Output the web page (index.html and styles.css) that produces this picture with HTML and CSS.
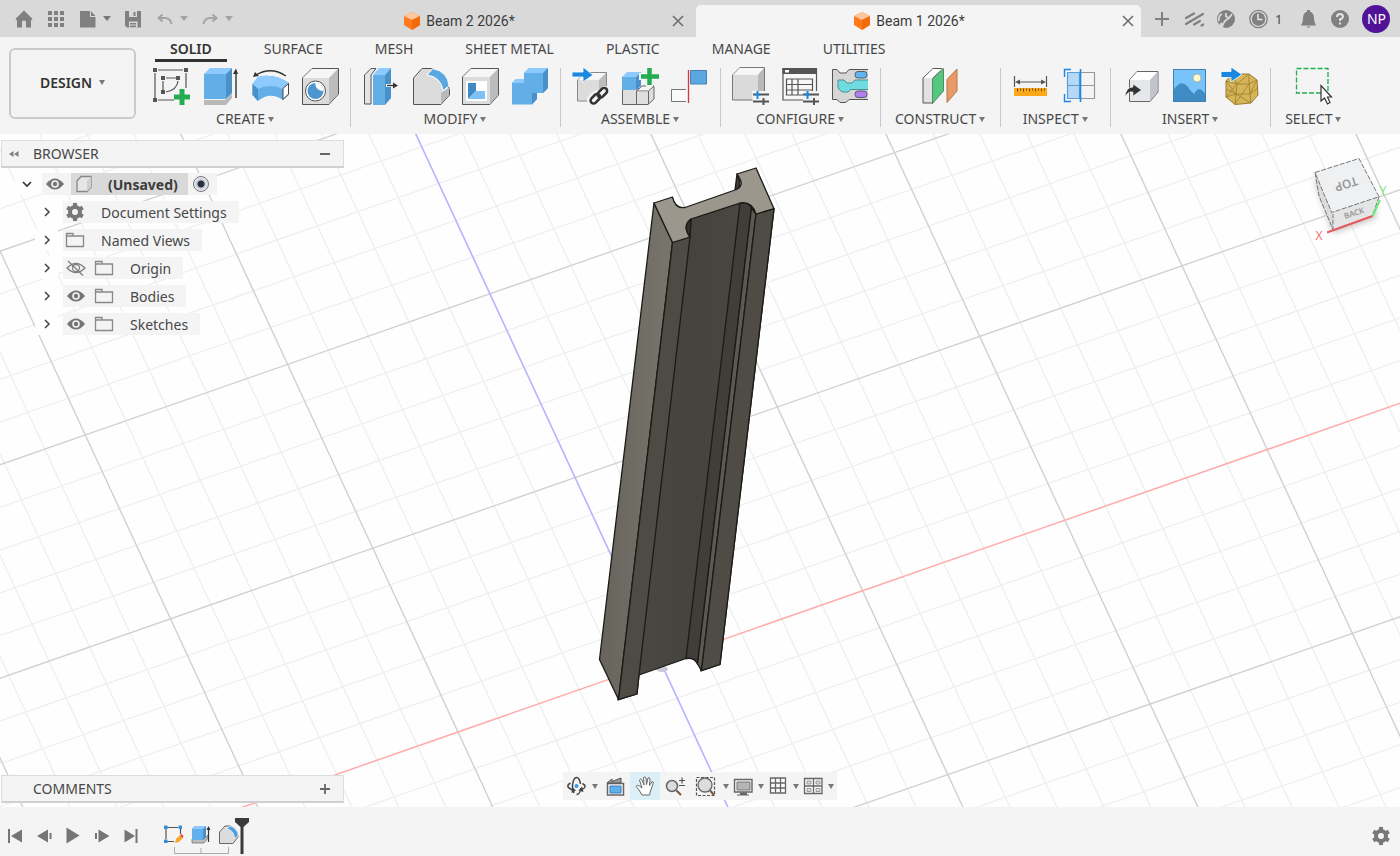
FILE: index.html
```html
<!DOCTYPE html>
<html lang="en">
<head>
<meta charset="utf-8">
<title>Beam 1 2026*</title>
<link rel="stylesheet" href="styles.css">
</head>
<body>
<div class="app">
  <header class="topbar">
    <div class="quick">
      <button class="tool" aria-label="Home"><svg viewBox="14 8 20 20"><path d="M24 9.500 15.800 17.500V19H17V26.500H22V20.500Q24 18.500 26 20.500V26.500H31V19H32.200V17.500Z" fill="#808080"/></svg></button>
      <button class="tool" aria-label="Show data panel"><svg viewBox="46 8 20 20"><path d="M48 10h4v4h-4zM54 10h4v4h-4zM60 10h4v4h-4zM48 16h4v4h-4zM54 16h4v4h-4zM60 16h4v4h-4zM48 22h4v4h-4zM54 22h4v4h-4zM60 22h4v4h-4z" fill="#808080"/></svg></button>
      <button class="tool tool--menu" aria-label="File"><svg viewBox="79 8 20 20"><path d="M81 10H91V16H96.500V26.500H81ZM92 10 96.500 15H92Z" fill="#808080"/></svg></button>
      <button class="tool" aria-label="Save"><svg viewBox="124 8 20 20"><path d="M126 10H142V26.500H128L126 24.500Z" fill="#808080"/><path d="M130 10h8v6h-8zM130 20.500h8.500v6h-8.500z" fill="#d9d9d9"/><path d="M134.500 11h2v4h-2zM131 22h6v1.500h-6zM131 24.500h6v1.500h-6z" fill="#808080"/></svg></button>
      <button class="tool tool--menu tool--off" aria-label="Undo"><svg viewBox="156 8 20 20"><path d="M163.500 13.500 159.500 17l4 3.500M160 17h6.500q5 .5 6 6" fill="none" stroke="#a3a3a3" stroke-width="2"/></svg></button>
      <button class="tool tool--menu tool--off" aria-label="Redo"><svg viewBox="200 8 20 20"><path d="M212.500 13.500 216.500 17l-4 3.500M216 17h-6.500q-5 .5-6 6" fill="none" stroke="#a3a3a3" stroke-width="2"/></svg></button>
    </div>
    <nav class="docs" aria-label="Documents">
      <div class="doc">
        <button class="doc__name"><svg viewBox="404 12 18 20"><path d="M405 17 413 13 421 17V26L413 31 405 26Z" fill="#ff7a1c"/><path d="M405 17 413 13 421 17 413 21Z" fill="#ffc79c"/><path d="M413 21 421 17V26L413 31Z" fill="#f26a0a"/></svg>Beam 2 2026*</button>
        <button class="doc__close" aria-label="Close Beam 2"><svg viewBox="0 0 12 12"><path d="M1 1 11 11M11 1 1 11" stroke="#6e6e6e" stroke-width="1.600"/></svg></button>
      </div>
      <div class="doc doc--active">
        <button class="doc__name"><svg viewBox="404 12 18 20"><path d="M405 17 413 13 421 17V26L413 31 405 26Z" fill="#ff7a1c"/><path d="M405 17 413 13 421 17 413 21Z" fill="#ffc79c"/><path d="M413 21 421 17V26L413 31Z" fill="#f26a0a"/></svg>Beam 1 2026*</button>
        <button class="doc__close" aria-label="Close Beam 1"><svg viewBox="0 0 12 12"><path d="M1 1 11 11M11 1 1 11" stroke="#6e6e6e" stroke-width="1.600"/></svg></button>
      </div>
    </nav>
    <div class="account">
      <button class="tool" aria-label="New design"><svg viewBox="1152 8 20 20"><path d="M1162 11v14M1155 18h14" stroke="#808080" stroke-width="2"/></svg></button>
      <button class="tool" aria-label="Extensions"><svg viewBox="1184 8 20 20"><path d="M1186 17 1194 12.500M1186 23 1203 13M1194 23.500 1200 20M1201.500 24.500l2-1" stroke="#808080" stroke-width="2.200" stroke-linecap="round"/></svg></button>
      <button class="tool" aria-label="Activity"><svg viewBox="1216 8 20 20"><circle cx="1226" cy="18" r="9" fill="#808080"/><path d="M1222 28Q1222 21 1229 17L1232 13M1229 17 1226 15.500V12M1219 20Q1218 15 1222 13" fill="none" stroke="#d9d9d9" stroke-width="1.800"/><path d="M1219 29 1219.500 23 1222 21 1223 29Z" fill="#d9d9d9"/></svg></button>
      <button class="tool tool--jobs" aria-label="Job status, 1 job"><svg viewBox="1248 8 20 20"><circle cx="1258.500" cy="18" r="8.700" fill="none" stroke="#808080" stroke-width="1.300"/><circle cx="1258.500" cy="18" r="6.700" fill="#808080"/><path d="M1258 13v5.500h4.500" fill="none" stroke="#e8e8e8" stroke-width="1.500"/></svg><span>1</span></button>
      <button class="tool" aria-label="Notifications"><svg viewBox="1298 8 20 20"><path d="M1307 10.500V9h3v1.500Q1314 12 1314 17 1314 22 1316 24.500H1301Q1303 22 1303 17 1303 12 1307 10.500ZM1306.500 25.500h4Q1308.500 28 1306.500 25.500Z" fill="#808080"/></svg></button>
      <button class="tool" aria-label="Help"><svg viewBox="1331 8 20 20"><circle cx="1341" cy="18" r="9" fill="#808080"/><path d="M1338 16Q1338 13 1341 13 1344 13 1344 15.500 1344 17 1341 18.500V20M1341 21.500v2" fill="none" stroke="#e4e4e4" stroke-width="2"/></svg></button>
      <button class="avatar" aria-label="Account NP">NP</button>
    </div>
  </header>

  <section class="ribbon">
    <button class="workspace caret">DESIGN</button>
    <div class="ribbon__main">
      <nav class="tabs" aria-label="Toolbar tabs">
        <button class="tab tab--active">SOLID</button>
        <button class="tab">SURFACE</button>
        <button class="tab">MESH</button>
        <button class="tab">SHEET METAL</button>
        <button class="tab">PLASTIC</button>
        <button class="tab">MANAGE</button>
        <button class="tab">UTILITIES</button>
      </nav>
      <div class="groups">
        <div class="group">
          <div class="group__tools">
            <button class="cmd" aria-label="Create sketch"><svg viewBox="150 66 40 40"><path d="M158 70h25M155 73v25M186 73v15M158 100h16M166 78h10M163 81v9M178 81Q177 90 166 92" fill="none" stroke="#555" stroke-width="1.200"/><path d="M153 68h4v4h-4zM184 68h4v4h-4zM153 98h4v4h-4zM161 76h4v4h-4zM176 76h4v4h-4zM161 90h4v4h-4z" fill="#555"/><path d="M182 89v16M174 97h16" stroke="#23ad50" stroke-width="5"/></svg></button>
            <button class="cmd" aria-label="Extrude"><svg viewBox="200 66 40 40"><path d="M204 100H225L232 93.500V98L226 105H204Z" fill="#b9b9b9"/><path d="M204 74H226V99H204Z" fill="#62aee6"/><path d="M204 74 210 68H232L226 74Z" fill="#8ccaff"/><path d="M226 74 232 68V93L226 99Z" fill="#4a90c9"/><path d="M236 98V71" stroke="#333" stroke-width="1.400"/><path d="M233 74h5l-2-5.500z" fill="#333"/></svg></button>
            <button class="cmd" aria-label="Revolve"><svg viewBox="250 66 40 40"><path d="M252.500 84 258 77Q274 73 289 83V95L283 100Q270 91 258 101L252.500 95Z" fill="#62aee6"/><path d="M252.500 84 258 77Q274 73 289 83L283 89Q270 83 258 89Z" fill="#8ccaff"/><path d="M252.500 84 258 89V101L252.500 95Z" fill="#4a90c9"/><path d="M283 88.500 288.500 83.500V94L283 99.500Z" fill="#fff" stroke="#444"/><path d="M286 76Q271 66 256 75" fill="none" stroke="#333" stroke-width="1.300"/><path d="M253 77 255 72 259 76Z" fill="#333"/></svg></button>
            <button class="cmd" aria-label="Hole"><svg viewBox="300 66 40 40"><path d="M302.500 78 312 68.500H338.500V94L329 104.500H302.500Z" fill="#dcdcdc" stroke="#555"/><path d="M303 78 312 69H338L329 78Z" fill="#f6f6f6"/><path d="M329 78 338 69V94L329 104Z" fill="#bcbcbc"/><circle cx="315.500" cy="91" r="10" fill="#fff" stroke="#555"/><circle cx="315.500" cy="91" r="8" fill="#4d96d0"/><path d="M315 83A8 8 0 0 1 323.500 91Q316 91 315 83Z" fill="#fff"/></svg></button>
          </div>
          <button class="group__label caret">CREATE</button>
        </div>
        <div class="group">
          <div class="group__tools">
            <button class="cmd" aria-label="Press pull"><svg viewBox="360 66 40 40"><path d="M364.500 75 371 68.500H376L371 75V104H364.500Z" fill="#e4e4e4" stroke="#555"/><path d="M373 75H385V105H373Z" fill="#62aee6"/><path d="M373 75 379 68H391L385 75Z" fill="#8ccaff"/><path d="M385 75 391 68V98L385 105Z" fill="#4a90c9"/><path d="M386 85.500H395" stroke="#fff" stroke-width="3"/><path d="M387 85.500H395" stroke="#333" stroke-width="1.400"/><path d="M393 82.500 398 85.500 393 88.500Z" fill="#333"/></svg></button>
            <button class="cmd" aria-label="Fillet"><svg viewBox="410 66 40 40"><path d="M413.500 78 422 68.500H431Q448 72 449.500 91V95L441 104.500H413.500Z" fill="#dcdcdc" stroke="#555"/><path d="M441 93 449 88V95L441 104Z" fill="#b9b9b9"/><path d="M427 75 433 68.500Q448 72 449 86L443 90.500Q441 77 427 75Z" fill="#5ba7e2" stroke="#fff"/></svg></button>
            <button class="cmd" aria-label="Shell"><svg viewBox="460 66 40 40"><path d="M462.500 77 471 68.500H498.500V95L490 104.500H462.500Z" fill="#dcdcdc" stroke="#555"/><path d="M463 77 471 69H498L490 77Z" fill="#f6f6f6"/><path d="M490 77 498 69V95L490 104Z" fill="#bcbcbc"/><path d="M466 81H487V101H466Z" fill="#fff"/><path d="M468 83H476V91L468 99Z" fill="#3f89c4"/><path d="M468 99 476 91H485V99Z" fill="#7cc0f5"/></svg></button>
            <button class="cmd" aria-label="Combine"><svg viewBox="510 66 40 40"><path d="M512 83 516 79H524V73L529 68H548V88L543 93H537V99L532 104.500H512Z" fill="#62aee6"/><path d="M524 73 529 68H548L543 73ZM512 83 516 79H524V83Z" fill="#8ccaff"/><path d="M543 73 548 68V88L543 93ZM532 93H537V99L532 104.500Z" fill="#4a90c9"/></svg></button>
          </div>
          <button class="group__label caret">MODIFY</button>
        </div>
        <div class="group">
          <div class="group__tools">
            <button class="cmd" aria-label="Insert component"><svg viewBox="571 66 40 40"><path d="M578.500 80 587 72.500H607.500V92L600 101H578.500Z" fill="#dcdcdc" stroke="#888"/><path d="M579 80 587 73H607L600 80Z" fill="#f6f6f6"/><path d="M600 80 607 73V92L600 101Z" fill="#bcbcbc"/><path d="M573 72H584V67L594 75 584 82V77H573Z" fill="#1b87e0" stroke="#fff" stroke-width=".8"/><g fill="none" stroke="#f4f4f4" stroke-width="6"><rect x="590" y="95" width="12" height="6" rx="3" transform="rotate(-45 596 98)"/><rect x="598" y="91" width="12" height="6" rx="3" transform="rotate(-45 604 94)"/></g><g fill="none" stroke="#333" stroke-width="2.500"><rect x="591" y="96" width="11" height="6" rx="3" transform="rotate(-45 596 99)"/><rect x="598" y="90" width="11" height="6" rx="3" transform="rotate(-45 603 93)"/></g></svg></button>
            <button class="cmd" aria-label="New component"><svg viewBox="621 66 40 40"><path d="M623.500 89V104.500H649L655 99V86.500L637 89Z" fill="#dedede" stroke="#666"/><path d="M637.500 104V91L643 86H655L649.500 91H637.500M649.500 91V104" fill="#f4f4f4" stroke="#666"/><path d="M638 91.500H649V104H638Z" fill="#dedede"/><path d="M623 77H637V90H623Z" fill="#62aee6"/><path d="M623 77 628 72H642L637 77Z" fill="#8ccaff"/><path d="M637 77 642 72V86L637 90Z" fill="#4a90c9"/><path d="M650.500 67v20M640 76.500h20" stroke="#f4f4f4" stroke-width="7"/><path d="M650.500 68v17M642 76.500h18" stroke="#23ad50" stroke-width="4.500"/></svg></button>
            <button class="cmd" aria-label="Joint"><svg viewBox="671 66 40 40"><path d="M687 89.500H672.500V101.500H687" fill="#fafafa" stroke="#777"/><path d="M691.500 70.500H707.500V84H691.500Z" fill="#5ba7e2" stroke="#4682b0"/><path d="M689.500 70V103" stroke="#d8383c" stroke-width="1.300"/></svg></button>
          </div>
          <button class="group__label caret">ASSEMBLE</button>
        </div>
        <div class="group">
          <div class="group__tools">
            <button class="cmd" aria-label="Configure model"><svg viewBox="732 66 40 40"><path d="M734.500 75 742 67.500H766.500V93L760 100H734.500Z" fill="#dadada" stroke="#777"/><path d="M735 75 742 68H766L760 75Z" fill="#f6f6f6"/><path d="M760 75 766 68V93L760 99Z" fill="#b9b9b9"/><path d="M754 91h18v14h-17z" fill="#f4f4f4"/><path d="M755 94.500h16M755 101.500h16M765.500 98v7" stroke="#555" stroke-width="2"/><path d="M759.500 91v8M757 94.500h5" stroke="#1b87e0" stroke-width="2"/></svg></button>
            <button class="cmd" aria-label="Configuration table"><svg viewBox="781 66 40 40"><path d="M784 68.500H817.500V100H784Z" fill="#f8f8f8" stroke="#555" stroke-width="1.200"/><path d="M783.500 68H818V74H783.500Z" fill="#555"/><path d="M786 70h4v2.500h-4z" fill="#fff"/><path d="M787.500 79H813.500V95H787.500ZM787.500 84.500H813.500M787.500 90H813.500M793 79V95M799 79V95" fill="none" stroke="#555" stroke-width="1.200"/><path d="M804 91h17v14h-17z" fill="#f4f4f4"/><path d="M804 94.500h16M804 101.500h16M815 98v7" stroke="#555" stroke-width="2"/><path d="M808.500 91v8M806 94.500h5" stroke="#1b87e0" stroke-width="2"/></svg></button>
            <button class="cmd" aria-label="Rules"><svg viewBox="831 66 40 40"><path d="M869 69.500H850L847 73H841L838 69.500H833.500V99.500H838L841 102.500H847L850 99.500H869" fill="#d6d6d6" stroke="#555"/><path d="M869 80H856L853 83H848L845 80H839V88L843 92H849L852 89.500H869" fill="#6fdde0" stroke="#4d8f92"/><rect x="856" y="71.500" width="12" height="6.500" rx="3" fill="#5fb5f3" stroke="#55606a"/><rect x="856" y="91" width="12" height="6.500" rx="3" fill="#b27cf2" stroke="#55606a"/></svg></button>
          </div>
          <button class="group__label caret">CONFIGURE</button>
        </div>
        <div class="group">
          <div class="group__tools">
            <button class="cmd" aria-label="Offset plane"><svg viewBox="922 66 40 40"><path d="M925 78 935 68.500H944L935 78V103H925Z" fill="#e2e2e2" stroke="#555"/><path d="M926 78 935 69H944L934 78Z" fill="#fff"/><path d="M934.500 79 945.500 68.500V91L934.500 103.500Z" fill="#55c77f" stroke="#4f8f66"/><path d="M949 79.500 959 69V91L949 102.500Z" fill="#e79a66" stroke="#b77747"/></svg></button>
          </div>
          <button class="group__label caret">CONSTRUCT</button>
        </div>
        <div class="group">
          <div class="group__tools">
            <button class="cmd" aria-label="Measure"><svg viewBox="1012 66 40 40"><path d="M1016.500 76V87M1048.500 76V87M1019 82H1046" stroke="#555" stroke-width="1.200"/><path d="M1017 82 1022 79.500V84.500ZM1048 82 1043 79.500V84.500Z" fill="#555"/><path d="M1016 88H1049V96H1016Z" fill="#fba919"/><path d="M1019.500 88.500v3M1022.500 88.500v2M1025.500 88.500v3M1028.500 88.500v2M1031.500 88.500v3M1034.500 88.500v2M1037.500 88.500v3M1040.500 88.500v2M1043.500 88.500v3M1046.500 88.500v2" stroke="#6b4a12"/></svg></button>
            <button class="cmd" aria-label="Section analysis"><svg viewBox="1062 66 40 40"><path d="M1083 72.500H1096.500V98.500H1083M1083 85.500H1096.500" fill="none" stroke="#999" stroke-width="1.200"/><path d="M1069.500 72.500H1081.500V98.500H1069.500ZM1069.500 85.500H1081.500" fill="#b4d8f6" stroke="#5a9fd6" stroke-width="1.200"/><path d="M1066.500 77V69.500H1073M1066.500 94V101.500H1073" fill="none" stroke="#1b87e0" stroke-width="1.400"/><path d="M1082.500 69V102" stroke="#1b87e0" stroke-width="1.600"/></svg></button>
          </div>
          <button class="group__label caret">INSPECT</button>
        </div>
        <div class="group">
          <div class="group__tools">
            <button class="cmd" aria-label="Insert derive"><svg viewBox="1123 66 40 40"><path d="M1132.500 80 1140 71.500H1161V92L1153 101.500H1132.500Z" fill="#e6e7ea" stroke="#666"/><path d="M1133 80 1140 72H1160L1153 80Z" fill="#fff"/><path d="M1153 80 1160.500 72V92L1153 101Z" fill="#c2c4cc"/><path d="M1128 97Q1129 87 1136 87V84L1144.500 90 1136 96V92Q1131 91 1128 97Z" fill="#333" stroke="#f4f4f4" stroke-width=".6"/></svg></button>
            <button class="cmd" aria-label="Canvas"><svg viewBox="1173 66 40 40"><path d="M1176 69H1209V102H1176Z" fill="#78c3fa"/><circle cx="1200" cy="78" r="4" fill="#fffbd0" stroke="#8a9a80" stroke-width=".6"/><path d="M1176 91Q1185 76 1193 90L1197 94Q1202 84 1209 95V102H1176Z" fill="#3f8cc4"/><path d="M1176.500 69.500H1208.500V101.500H1176.500Z" fill="none" stroke="#3f7fb0"/></svg></button>
            <button class="cmd" aria-label="Insert mesh"><svg viewBox="1223 66 40 40"><path d="M1229 81 1235 74 1252 74 1260 80 1261 95 1254 103 1238 104.500 1229 97Z" fill="#d6b458" stroke="#9b7d2e"/><path d="M1229 81 1240 84 1252 84 1260 80M1240 84 1238 104M1252 84 1254 103M1229 97 1240 84M1238 104 1252 84M1229 89 1239 94 1253 94 1261 88M1229 81 1239 94M1253 94 1260 80M1240 84 1252 74 1252 84M1235 74 1240 84M1239 94 1229 97M1254 103 1239 94" fill="none" stroke="#9b7d2e" stroke-width=".8"/><path d="M1224 71.500H1234V67L1245 74.500 1234 82V77.500H1224Z" fill="#1b87e0" stroke="#fff" stroke-width=".8"/></svg></button>
          </div>
          <button class="group__label caret">INSERT</button>
        </div>
        <div class="group">
          <div class="group__tools">
            <button class="cmd" aria-label="Select"><svg viewBox="1297 66 40 40"><path d="M1300.500 68.500H1332V93H1300.500Z" fill="none" stroke="#23ad50" stroke-width="1.300" stroke-dasharray="5 2"/><path d="M1325 85.500V101L1328.500 98 1331.500 104 1334 102.500 1331.500 97H1335.500Z" fill="#fff" stroke="#333" stroke-width="1.200"/></svg></button>
          </div>
          <button class="group__label caret">SELECT</button>
        </div>
      </div>
    </div>
  </section>

  <main class="viewport">
    <svg class="scene" viewBox="0 134 1400 673" preserveAspectRatio="xMidYMid slice" aria-label="Beam model">
      <defs>
        <linearGradient id="side" x1="0" y1="0" x2="1" y2="0"><stop offset="0" stop-color="#66645c"/><stop offset="1" stop-color="#77756c"/></linearGradient>
        <linearGradient id="web" x1="0" y1="0" x2="1" y2="0"><stop offset="0" stop-color="#4b4943"/><stop offset=".5" stop-color="#45433e"/><stop offset="1" stop-color="#4c4a43"/></linearGradient>
      </defs>
      <g transform="matrix(1.0115 -0.353 0.426 0.919 660.300 661.400)" fill="none">
        <g stroke="#eeeeee" stroke-width="1.200">
          <path d="M-1200-880H1200M-1200-840H1200M-1200-760H1200M-1200-720H1200M-1200-680H1200M-1200-640H1200M-1200-560H1200M-1200-520H1200M-1200-480H1200M-1200-440H1200M-1200-360H1200M-1200-320H1200M-1200-280H1200M-1200-240H1200M-1200-160H1200M-1200-120H1200M-1200-80H1200M-1200-40H1200M-1200 40H1200M-1200 80H1200M-1200 120H1200M-1200 160H1200M-1200 240H1200M-1200 280H1200M-1200 320H1200M-1200 360H1200M-1200 440H1200"/>
          <path d="M-760-900V900M-720-900V900M-680-900V900M-640-900V900M-560-900V900M-520-900V900M-480-900V900M-440-900V900M-360-900V900M-320-900V900M-280-900V900M-240-900V900M-160-900V900M-120-900V900M-80-900V900M-40-900V900M40-900V900M80-900V900M120-900V900M160-900V900M240-900V900M280-900V900M320-900V900M360-900V900M440-900V900M480-900V900M520-900V900M560-900V900M640-900V900M680-900V900M720-900V900M760-900V900M840-900V900M880-900V900"/>
        </g>
        <path d="M-1200-800H1200M-1200-600H1200M-1200-400H1200M-1200-200H1200M-1200 200H1200M-1200 400H1200M-800-900V900M-600-900V900M-400-900V900M-200-900V900M200-900V900M400-900V900M600-900V900M800-900V900" stroke="#d0d0d0" stroke-width="1.300"/>
        <path d="M-1200 0H1200" stroke="#ffabab" stroke-width="1.500"/>
        <path d="M0-900V900" stroke="#b4b4ff" stroke-width="1.500"/>
      </g>
      <ellipse cx="662" cy="669" rx="6" ry="3" fill="#c9c9d6"/>
      <g stroke="#1b1a17" stroke-width="1.300" stroke-linejoin="round">
        <path d="M691 219 740 203Q753 203 756 214L774 209 720 664.500 701 671Q698 656 686 658.500L639 675 637 694 618 700 672 242 690 237Z" fill="url(#web)"/>
        <path d="M654 203 672.500 242.500 618.500 699.500 599.500 659.500Z" fill="url(#side)"/>
        <path d="M672.500 242.500 690 237 639 675 637 694 618.500 699.500Z" fill="#4e4b44"/>
        <path d="M740 203Q749 202 751.500 208L697.500 664Q694 657 686 658.500Z" fill="#403e39"/>
        <path d="M751.500 208 756 214 701.500 670.500 697.500 664Z" fill="#5b5952"/>
        <path d="M756 214 774 208.700 720 664.500 701.500 670.500Z" fill="#4e4c45"/>
        <path d="M737 174 740 182Q740 189 735 190Z" fill="#3e3c37"/>
        <path d="M654 203 672.500 197Q675 209 685 207.500L735 190Q745 186 739 177L737 174 756 168 774 208.700 756 214Q752 201 740 203L691 219Q682 226 690 237L672.500 242.500Z" fill="#9b978c"/>
        <path d="M691 219Q682 226 690 237Z" fill="#34322e"/>
      </g>
    </svg>

    <svg class="viewcube" viewBox="1300 145 100 100" aria-label="View cube">
      <defs><filter id="soft"><feGaussianBlur stdDeviation="3"/></filter></defs>
      <path d="M1314 178 1333 233 1376 218 1374 200Z" fill="#999" opacity=".6" filter="url(#soft)"/>
      <path d="M1315 172.500 1331.700 212.500 1333 229.500 1319 196Z" fill="#dcdcdc"/>
      <path d="M1331.700 212.500 1379 196.700 1372.500 216 1333 229.500Z" fill="#e4e5e6"/>
      <path d="M1315 172.500 1359 158.500 1379 196.700 1331.700 212.500Z" fill="#eff0f1"/>
      <path d="M1315 172.500 1359 158.500 1379 196.700 1331.700 212.500ZM1315 172.500 1319 196 1333 229.500V214M1379 196.700 1372.500 216" fill="none" stroke="#777" stroke-dasharray="5 1.500"/>
      <path d="M1327 232.500 1372.500 216" stroke="#e5595c" stroke-width="2"/>
      <path d="M1372.500 216 1380 200" stroke="#6be873" stroke-width="2"/>
      <text class="viewcube__top" x="1346" y="184" transform="rotate(162 1346 184)" dy="4">TOP</text>
      <text class="viewcube__back" x="1354" y="213" transform="rotate(-17 1354 213)" dy="3">BACK</text>
      <text class="viewcube__x" x="1319" y="240">X</text>
      <text class="viewcube__y" x="1383" y="195">Y</text>
    </svg>

    <aside class="browser">
      <header class="panel">
        <button class="panel__fold" aria-label="Collapse browser"><svg viewBox="0 0 10 8"><path d="M4.500 1V7L0 4ZM9.500 1V7L5 4Z" fill="#808080"/></svg></button>
        <h2>BROWSER</h2>
        <button class="panel__act" aria-label="Minimize browser"><svg viewBox="0 0 12 12"><path d="M1 6H11" stroke="#666" stroke-width="2"/></svg></button>
      </header>
      <ul class="tree">
        <li class="row row--root">
          <button class="twist" aria-label="Collapse"><svg viewBox="0 0 12 12"><path d="M2 4 6 8 10 4" fill="none" stroke="#333" stroke-width="1.600"/></svg></button>
          <span class="row__body">
            <button class="ico" aria-label="Toggle visibility"><svg viewBox="0 0 20 20"><use href="#eye"/></svg></button>
            <button class="item item--on"><svg viewBox="0 0 20 20"><path d="M3 7 7 2.500H17V13L13 17.500H3Z" fill="#e6e6e6" stroke="#888" stroke-width="1.300"/><path d="M13 7 17 2.500V13L13 17.500Z" fill="#cfcfcf"/></svg><b>(Unsaved)</b></button>
            <label class="activate"><input type="radio" name="active" checked aria-label="Activate component"></label>
          </span>
        </li>
        <li class="row">
          <button class="twist" aria-label="Expand"><svg viewBox="0 0 12 12"><use href="#chev"/></svg></button>
          <span class="row__body"><button class="item"><svg viewBox="0 0 20 20"><use href="#gear"/></svg>Document Settings</button></span>
        </li>
        <li class="row">
          <button class="twist" aria-label="Expand"><svg viewBox="0 0 12 12"><use href="#chev"/></svg></button>
          <span class="row__body"><button class="item"><svg viewBox="0 0 20 20"><use href="#folder"/></svg>Named Views</button></span>
        </li>
        <li class="row">
          <button class="twist" aria-label="Expand"><svg viewBox="0 0 12 12"><use href="#chev"/></svg></button>
          <span class="row__body"><button class="ico" aria-label="Toggle visibility"><svg viewBox="0 0 20 20"><path d="M1 10Q10 1 19 10 10 19 1 10Z" fill="none" stroke="#808080" stroke-width="1.300"/><circle cx="10" cy="10" r="3.500" fill="none" stroke="#808080" stroke-width="1.300"/><path d="M2 3 17 17.500" stroke="#808080" stroke-width="1.300"/></svg></button><button class="item"><svg viewBox="0 0 20 20"><use href="#folder"/></svg>Origin</button></span>
        </li>
        <li class="row">
          <button class="twist" aria-label="Expand"><svg viewBox="0 0 12 12"><use href="#chev"/></svg></button>
          <span class="row__body"><button class="ico" aria-label="Toggle visibility"><svg viewBox="0 0 20 20"><use href="#eye"/></svg></button><button class="item"><svg viewBox="0 0 20 20"><use href="#folder"/></svg>Bodies</button></span>
        </li>
        <li class="row">
          <button class="twist" aria-label="Expand"><svg viewBox="0 0 12 12"><use href="#chev"/></svg></button>
          <span class="row__body"><button class="ico" aria-label="Toggle visibility"><svg viewBox="0 0 20 20"><use href="#eye"/></svg></button><button class="item"><svg viewBox="0 0 20 20"><use href="#folder"/></svg>Sketches</button></span>
        </li>
      </ul>
    </aside>

    <div class="dock">
      <div class="panel">
        <h2>COMMENTS</h2>
        <button class="panel__act" aria-label="Show comments"><svg viewBox="0 0 12 12"><path d="M1 6H11M6 1V11" stroke="#666" stroke-width="1.800"/></svg></button>
      </div>
      <div class="navbar">
        <button class="nav nav--s" aria-label="Orbit"><svg viewBox="567 775 22 22"><path d="M575 793Q573 790 573.500 785 574.500 777.500 577.500 777.500 580.500 777.500 581.500 784M582 788Q581 794.500 577.500 794.500" fill="none" stroke="#444" stroke-width="1.500"/><path d="M571.500 783Q566 786 571.500 789L574 790M583.500 783.500Q589 786.500 583 789.500" fill="none" stroke="#444" stroke-width="1.500"/><path d="M573 787 577 790.500 572.500 793ZM583 786.500 579.500 790.500 584.500 792Z" fill="#444"/><circle cx="577.500" cy="786" r="2" fill="#3b9de8"/></svg></button>
        <button class="drop caret" aria-label="Orbit options"></button>
        <button class="nav" aria-label="Look at"><svg viewBox="605 775 22 22"><path d="M608.500 783.500H624.500V795H608.500Z" fill="#f8f8f8" stroke="#666" stroke-width="1.500"/><path d="M611 786H622V793H611Z" fill="#5fb0ee" stroke="#3b7fb8"/><path d="M608 783 613 779V781.500L622 778V783Z" fill="#9a9a9a" stroke="#555"/></svg></button>
        <button class="nav nav--on" aria-label="Pan"><svg viewBox="636 775 22 22"><path d="M644 795Q641 789 638 786.500 639 784.500 641.500 786L644 788 641.500 780Q642.500 778 644 780L646 785 645.500 777.500Q647 776 648 778L648.500 784.500 650 778Q651.500 777 652 779L651.500 785.500 654 781.500Q656 781.500 655 784L652.500 791 651.500 795Z" fill="#fff" stroke="#666"/></svg></button>
        <button class="nav" aria-label="Zoom"><svg viewBox="665 775 22 22"><circle cx="673" cy="786" r="5.500" fill="#dcdcdc" stroke="#666" stroke-width="1.500"/><path d="M677.500 790.500 682 795" stroke="#7a5a48" stroke-width="2.200"/><path d="M680 780.500h6M683 777.500v6M680 785.500h6" stroke="#555" stroke-width="1.200"/></svg></button>
        <button class="nav" aria-label="Fit"><svg viewBox="695 775 22 22"><path d="M697.500 777.500H715.500V795.500H697.500Z" fill="none" stroke="#555" stroke-width="1.200" stroke-dasharray="3 1.500"/><circle cx="706" cy="785" r="7" fill="#dcdcdc" stroke="#666" stroke-width="1.300"/><path d="M711 790.500 715 795" stroke="#7a5a48" stroke-width="2.200"/></svg></button>
        <button class="drop caret" aria-label="Fit options"></button>
        <button class="nav nav--s" aria-label="Display settings"><svg viewBox="733 775 22 22"><path d="M735.500 779.500H753V792H735.500Z" fill="#f4f4f4" stroke="#666" stroke-width="1.400"/><path d="M738 782H751V790H738Z" fill="#b5b5b5" stroke="#777"/><path d="M741 792.500h7v2h-7zM738 794.500h12v1h-12z" fill="#666"/></svg></button>
        <button class="drop caret" aria-label="Display options"></button>
        <button class="nav nav--s" aria-label="Grid and snaps"><svg viewBox="768 775 22 22"><path d="M771.500 778H786.500V793H771.500ZM776.500 778V793M781.500 778V793M771.500 783H786.500M771.500 788H786.500" fill="#fafafa" stroke="#666" stroke-width="1.300"/></svg></button>
        <button class="drop caret" aria-label="Grid options"></button>
        <button class="nav nav--s" aria-label="Viewports"><svg viewBox="805 775 22 22"><path d="M807.500 778.500H825V793.500H807.500ZM816.500 778.500V793.500M807.500 786H825" fill="#fafafa" stroke="#666" stroke-width="1.300"/><path d="M810 781h4v3h-4zM819 781h4v3h-4zM810 788.500h4v3h-4zM819 788.500h4v3h-4z" fill="#ddd" stroke="#888" stroke-width=".8"/></svg></button>
        <button class="drop caret" aria-label="Viewport options"></button>
      </div>
    </div>
  </main>

  <footer class="timeline">
    <div class="play">
      <button aria-label="Go to start"><svg viewBox="5 826 20 20"><path d="M8 829h2v14H8zM22 829.500V842.500L11 836Z" fill="#757575"/></svg></button>
      <button aria-label="Step back"><svg viewBox="34 826 20 20"><path d="M48 829.500V842.500L37 836ZM49.500 833h2v6h-2z" fill="#757575"/></svg></button>
      <button aria-label="Play"><svg viewBox="63 826 20 20"><path d="M66.500 827.500V843.500L79.500 835.500Z" fill="#757575"/></svg></button>
      <button aria-label="Step forward"><svg viewBox="91 826 20 20"><path d="M97.500 829.500V842.500L108.500 836ZM94 833h2v6h-2z" fill="#757575"/></svg></button>
      <button aria-label="Go to end"><svg viewBox="120 826 20 20"><path d="M123.500 829.500V842.500L134 836ZM134.500 829h2v14h-2z" fill="#757575"/></svg></button>
    </div>
    <svg class="history" viewBox="160 814 92 42" aria-label="Sketch, extrude and fillet features">
      <path d="M167 827.500H178M166 829V839M180.500 829V834M167 841.500H174" stroke="#555" stroke-width="1.200"/>
      <path d="M164 825.500h3.500v3.500h-3.500zM178.500 825.500h3.500v3.500h-3.500zM164 839.500h3.500v3.500h-3.500z" fill="#2c8fe0"/>
      <path d="M175 843 176 839 180 835 183 838 179 842Z" fill="#f9a825"/><path d="M180 835 181.500 834 183.500 836 182.500 838Z" fill="#e5393e"/>
      <path d="M192 839 204 839 208 835V838L204 843H192Z" fill="#bcbcbc" stroke="#777" stroke-width=".8"/>
      <path d="M192 829 195 826H206V837L203 840H192Z" fill="#4a90c9"/><path d="M192 829H203V840H192Z" fill="#62b1ee"/><path d="M192 829 195 826H206L203 829Z" fill="#8ccaff"/>
      <path d="M208.500 842V828" stroke="#333" stroke-width="1.200"/><path d="M206.500 830h4l-2-4z" fill="#333"/>
      <path d="M219.500 832 225 826H230Q238 829 238 837L233 843.500H219.500Z" fill="#dcdcdc" stroke="#666"/><path d="M227 829 230 826Q238 829 238 836L234.500 838.500Q234 830 227 829Z" fill="#4d9ede" stroke="#fff" stroke-width=".6"/>
      <path d="M174.500 847V853.500H228.500V847M201 848V853" fill="none" stroke="#aaa"/>
      <path d="M235 818H249V822L243.500 827V854H240.500V827L235 822Z" fill="#3a3a3a"/>
    </svg>
    <button class="timeline__settings" aria-label="Timeline settings"><svg viewBox="0 0 20 20"><use href="#gear"/></svg></button>
  </footer>
</div>
<svg class="symbols" aria-hidden="true">
  <symbol id="eye" viewBox="0 0 20 20"><path d="M1 10Q10-1 19 10 10 21 1 10Z" fill="#757575"/><circle cx="10" cy="10" r="3.800" fill="#f4f4f4"/><circle cx="10" cy="10" r="2.200" fill="#757575"/></symbol>
  <symbol id="chev" viewBox="0 0 12 12"><path d="M4 2 8 6 4 10" fill="none" stroke="#444" stroke-width="1.500"/></symbol>
  <symbol id="folder" viewBox="0 0 20 20"><path d="M1.500 3.500H8V6H18.500V16.500H1.500ZM1.500 6H8" fill="none" stroke="#888" stroke-width="1.300"/></symbol>
  <symbol id="gear" viewBox="0 0 20 20"><circle cx="10" cy="10" r="5" fill="none" stroke="#777" stroke-width="4"/><path d="M10 1V4M10 16V19M2.200 5.500 4.800 7M15.200 13 17.800 14.500M2.200 14.500 4.800 13M15.200 7 17.800 5.500" stroke="#777" stroke-width="4"/></symbol>
</svg>
</body>
</html>
```
FILE: styles.css
```css
* { box-sizing: border-box; }
body {
  margin: 0;
  background: #fefefe;
  color: #484848;
  font-family: "Noto Sans", "Open Sans", sans-serif;
  font-size: 14px;
}
button {
  display: flex;
  align-items: center;
  justify-content: center;
  margin: 0;
  padding: 0;
  border: 0;
  background: none;
  color: inherit;
  font: inherit;
  white-space: nowrap;
}
svg { display: block; flex: none; }
h2 { margin: 0; font-size: 14px; font-weight: 400; }
.symbols { display: none; }
.app { display: flex; flex-direction: column; min-height: 100vh; }

.caret::after {
  content: "";
  border: 3px solid transparent;
  border-top: 5px solid #777;
  border-bottom: 0;
}

/* Title bar */
.topbar { display: flex; height: 37px; background: #d9d9d9; }
.quick { display: flex; align-items: center; gap: 12px; width: 246px; padding-left: 14px; }
.tool svg { width: 20px; height: 20px; }
.tool--menu { gap: 5px; }
.tool--menu::after {
  content: "";
  border: 4px solid transparent;
  border-top: 5px solid #777;
  border-bottom: 0;
}
.tool--off::after { border-top-color: #a3a3a3; }
.docs { display: flex; flex: 1; gap: 5px; padding-top: 5px; }
.doc { display: flex; flex: 1; align-items: center; padding-right: 7px; border-radius: 5px 5px 0 0; }
.doc--active { background: #f4f4f4; }
.doc__name { flex: 1; gap: 5px; font-family: Roboto, "Liberation Sans", sans-serif; color: #3c3c3c; }
.doc__name svg { width: 18px; height: 20px; }
.doc__close svg { width: 12px; height: 12px; }
.account { display: flex; align-items: center; gap: 12px; width: 259px; padding-left: 11px; }
.tool--jobs { gap: 7px; margin-right: 4px; font-size: 13px; }
.avatar { width: 28px; height: 28px; border-radius: 50%; background: #501297; color: #fff; }

/* Ribbon */
.ribbon { display: flex; gap: 4px; padding: 3px 0 7px 9px; background: #f4f4f4; }
.workspace {
  gap: 7px;
  width: 127px;
  margin: 8px 0;
  padding-bottom: 2px;
  border: 2px solid #cbcbcb;
  border-radius: 6px;
  font-weight: 600;
  color: #333;
}
.ribbon__main { flex: 1; min-width: 0; }
.tabs { display: flex; gap: 22px; padding-left: 15px; }
.tab { height: 22px; padding: 0 15px 2px; border-bottom: 3px solid transparent; line-height: 16px; }
.tab--active { border-bottom-color: #333; font-weight: 600; color: #333; }
.groups { display: flex; padding-top: 4px; }
.group { position: relative; display: flex; flex-direction: column; align-items: center; gap: 5px; padding: 0 10px; }
.group + .group::before {
  content: "";
  position: absolute;
  left: 0;
  top: 2px;
  bottom: 0;
  width: 1px;
  background: #c8c8c8;
}
.group__tools { display: flex; gap: 10px; }
.cmd svg { width: 40px; height: 40px; }
.group__label { gap: 3px; padding: 0 5px; line-height: 16px; }

/* Canvas */
.viewport { position: relative; display: flex; flex: 1; flex-direction: column; justify-content: space-between; overflow: hidden; }
.scene { position: absolute; inset: 0; width: 100%; height: 100%; }
.viewcube { position: absolute; top: 11px; right: 0; width: 100px; height: 100px; }
.viewcube text { font-family: "Noto Sans", sans-serif; text-anchor: middle; }
.viewcube__top { font-size: 12px; font-weight: 600; fill: #999; }
.viewcube__back { font-size: 8px; font-weight: 600; fill: #999; }
.viewcube__x { font-size: 12px; fill: #f07578; }
.viewcube__y { font-size: 12px; fill: #7beb82; }
.browser { position: relative; padding-top: 6px; }
.panel {
  display: flex;
  align-items: center;
  position: relative;
  width: 343px;
  height: 28px;
  margin-left: 1px;
  padding: 0 12px 0 31px;
  border: 1px solid #dcdcdc;
  border-bottom: 2px solid #d0d0d0;
  background: #f4f4f4;
}
.panel h2 { flex: 1; }
.panel__fold { width: 23px; margin-left: -31px; margin-right: 8px; }
.panel__fold svg { width: 10px; height: 8px; }
.panel__act svg { width: 12px; height: 12px; }
.tree { display: flex; flex-direction: column; gap: 6px; margin: 0; padding: 5px 0 0; list-style: none; }
.row { display: flex; align-items: center; height: 22px; padding-left: 35px; }
.row--root { padding-left: 15px; }
.twist { width: 23px; height: 22px; background: #fefefe; }
.twist svg { width: 12px; height: 12px; }
.row__body { display: flex; align-items: center; margin-left: 5px; background: #f4f4f4; }
.row--root .row__body { margin-left: 4px; }
.row__body svg { width: 20px; height: 20px; }
.ico { width: 25px; height: 22px; margin-right: 4px; }
.item { gap: 16px; height: 22px; padding: 0 12px 0 2px; }
.item--on { gap: 14px; padding: 0 10px 0 3px; background: #d9d9d9; color: #3c3c3c; }
.activate { display: flex; padding: 0 8px 0 5px; }
.activate input {
  width: 16px;
  height: 16px;
  margin: 0;
  border: 1px solid #777;
  border-radius: 50%;
  appearance: none;
  background: radial-gradient(circle, #2b3040 0 3px, #c6ccd8 4px, #f4f4f4 8px);
}
.dock { display: flex; align-items: flex-start; padding-bottom: 4px; }
.dock .panel { flex: none; margin-top: 2px; }
.navbar {
  position: absolute;
  left: 50%;
  bottom: 7px;
  display: flex;
  height: 28px;
  padding: 0 1px 0 2px;
  background: #f4f4f4;
  transform: translateX(-50%);
}
.nav { width: 30px; }
.nav--s { width: 24px; }
.nav--on { background: #dceef6; }
.nav svg { width: 22px; height: 22px; }
.drop { width: 11px; }

/* Timeline */
.timeline { display: flex; align-items: center; height: 49px; padding: 0 9px 0 5px; background: #f4f4f4; }
.play { display: flex; gap: 9px; padding-top: 8px; }
.play svg, .timeline__settings svg { width: 20px; height: 20px; }
.history { width: 92px; height: 42px; margin: 7px auto 0 19px; }
.timeline__settings { padding-top: 8px; }
```
